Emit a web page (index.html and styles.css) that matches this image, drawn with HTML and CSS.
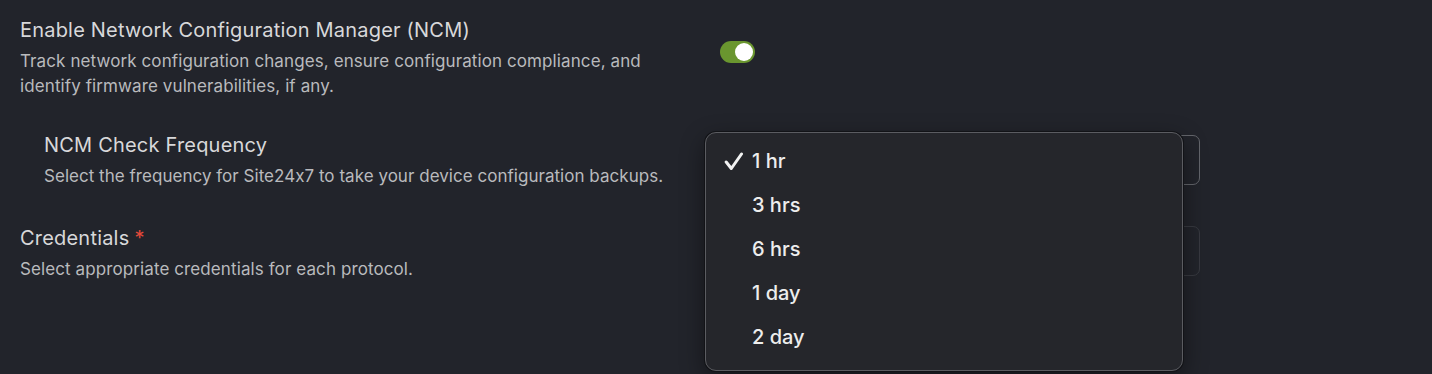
FILE: index.html
```html
<!DOCTYPE html>
<html>
<head>
<title>NCM Settings</title>
<link rel="stylesheet" href="styles.css">
</head>
<body>

<div class="settings">
    <div class="row row-top">
        <div class="info">
            <div class="label">Enable Network Configuration Manager (NCM)</div>
            <div class="desc">Track network configuration changes, ensure configuration compliance, and identify firmware vulnerabilities, if any.</div>
        </div>
        <div class="control">
            <span class="toggle on"><span class="knob"></span></span>
        </div>
    </div>

    <div class="row row-sub">
        <div class="info">
            <div class="label">NCM Check Frequency</div>
            <div class="desc">Select the frequency for Site24x7 to take your device configuration backups.</div>
        </div>
        <div class="control">
            <div class="select-box"></div>
            <ul class="menu">
                <li class="selected"><span class="tick">
                    <svg width="20" height="19" viewBox="0 0 20 19"><path d="M2.2 10 L7.3 16.5 L17.5 2" fill="none" stroke="#f2f2f2" stroke-width="3" stroke-linecap="round" stroke-linejoin="round"/></svg>
                </span>1 hr</li>
                <li><span class="tick"></span>3 hrs</li>
                <li><span class="tick"></span>6 hrs</li>
                <li><span class="tick"></span>1 day</li>
                <li><span class="tick"></span>2 day</li>
            </ul>
        </div>
    </div>

    <div class="row row-cred">
        <div class="info">
            <div class="label">Credentials<span class="req">*</span></div>
            <div class="desc">Select appropriate credentials for each protocol.</div>
        </div>
        <div class="control">
            <div class="select-box faint"></div>
        </div>
    </div>
</div>

</body>
</html>
```

FILE: styles.css
```css
html, body {
    min-height: 100%;
}
body {
    margin: 0;
    min-height: 374px;
    background-color: #22242b;
    font-family: Inter, "Noto Sans", sans-serif;
    color: #d4d4d6;
}
.settings {
    padding: 17px 0 0 20px;
}
.row {
    display: flex;
    align-items: flex-start;
}
.info {
    width: 700px;
    flex: none;
}
.label {
    font-size: 20px;
    line-height: 26px;
    color: #d8d8da;
    letter-spacing: 0.2px;
}
.desc {
    margin-top: 6px;
    font-size: 17px;
    line-height: 25px;
    color: #b9babd;
    letter-spacing: 0.1px;
}
.row-top .desc {
    width: 640px;
}
.control {
    position: relative;
}
.row-top .control {
    padding-top: 24px;
}
.toggle {
    display: flex;
    align-items: center;
    justify-content: flex-end;
    width: 35px;
    height: 22px;
    padding: 0 2px;
    box-sizing: border-box;
    border-radius: 11px;
    background-color: #6a962f;
}
.knob {
    width: 18px;
    height: 18px;
    border-radius: 50%;
    background-color: #ffffff;
}
.row-sub {
    margin-top: 33px;
}
.row-sub .info {
    width: 676px;
    padding-left: 24px;
}
.row-sub .desc {
    letter-spacing: 0.03px;
}
.row-sub .control {
    padding-top: 3px;
}
.select-box {
    width: 480px;
    height: 50px;
    box-sizing: border-box;
    border: 1px solid #64666c;
    border-radius: 7px;
}
.select-box.faint {
    border-color: #383a41;
}
.menu {
    position: absolute;
    left: -15px;
    top: 0;
    width: 478px;
    height: 239px;
    box-sizing: border-box;
    margin: 0;
    padding: 6px 0 0 0;
    list-style: none;
    background-color: #25262b;
    border: 1px solid #5b5c61;
    border-radius: 11px;
    box-shadow: 0 0 0 1px #121317, 0 8px 24px rgba(0, 0, 0, 0.45);
    z-index: 2;
}
.menu li {
    display: flex;
    align-items: center;
    height: 44px;
    font-size: 20px;
    font-weight: 500;
    color: #ededed;
}
.tick {
    display: flex;
    align-items: center;
    width: 46px;
    padding-left: 18px;
    box-sizing: border-box;
}
.row-cred {
    margin-top: 36px;
}
.row-cred .control {
    padding-top: 1px;
}
.req {
    margin-left: 5px;
    color: #e5493a;
    font-size: 20px;
}
```
